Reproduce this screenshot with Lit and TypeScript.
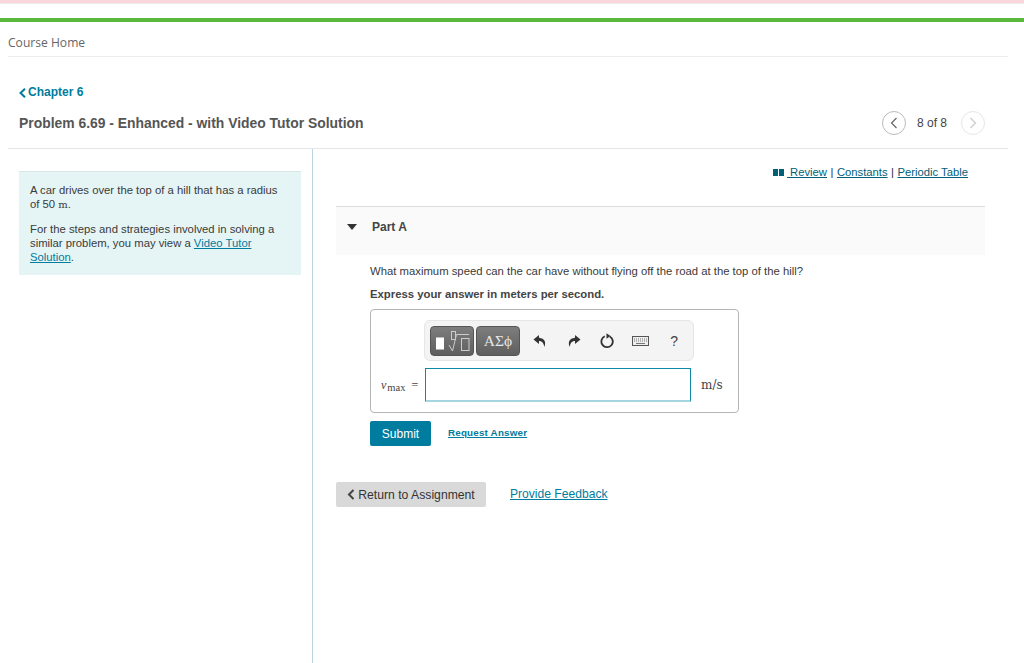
import { LitElement, html, css } from "lit";
import { customElement } from "lit/decorators.js";

@customElement("app-root")
export class AppRoot extends LitElement {
  static styles = css`
    :host { display: block; height: 663px; overflow: hidden; background: #fff; font-family: "Liberation Sans", Arial, sans-serif; color: #333; font-size: 11.3px; }
    a { color: #007c9e; text-decoration: underline; }
    .pink { height: 3px; background: #fbd6dc; border-bottom: 1px solid #ececec; }
    .green { height: 4px; margin-top: 14px; background: #5ab83c; }
    .home { margin: 0 16px 0 8px; height: 34px; border-bottom: 1px solid #ececec; font: 12.1px/41px "Open Sans", sans-serif; color: #666; }
    .head { margin: 0 16px 0 8px; height: 91px; border-bottom: 1px solid #e6e6e6; padding-left: 11px; }
    .chapter { display: flex; align-items: center; gap: 2px; padding-top: 29px; height: 13px; font-weight: 700; font-size: 12px; line-height: 13px; color: #007c9e; }
    .titlerow { display: flex; align-items: center; justify-content: space-between; margin-top: 14px; height: 20px; padding-right: 23px; }
    h1 { margin: 0; font-size: 13.9px; font-weight: 700; color: #555; line-height: 20px; }
    .pager { display: flex; align-items: center; font-size: 12px; color: #444; }
    .pager span.txt { margin: 0 14px 0 11px; }
    .circle { width: 24px; height: 24px; border: 1px solid #bbb; border-radius: 50%; box-sizing: border-box; display: flex; align-items: center; justify-content: center; }
    .circle.off { border-color: #e6e6e6; }
    .body { display: grid; grid-template-columns: 305px 1fr; margin-left: 8px; height: 514px; }
    .left { border-right: 1px solid #bcd3e3; padding: 22px 11px 0 11px; }
    .info { background: #e5f5f6; border-top: 1px solid #dbe6e8; padding: 11px 20px 0 11px; height: 92px; line-height: 14px; color: #3a3a3a; }
    .info p { margin: 0 0 11px; }
    .serif { font-family: "DejaVu Serif", "Liberation Serif", serif; font-size: 10px; line-height: 1; }
    .right { padding: 0 39px 0 23px; }
    .links { display: flex; justify-content: flex-end; align-items: center; height: 46px; padding-right: 17px; box-sizing: border-box; gap: 3.5px; margin-bottom: 11px; color: #333; font-size: 11.25px; }
    .links a { color: #00607a; }
    .links svg { margin-right: -1px; }
    .part { height: 49px; background: #fafafa; border-top: 1px solid #ddd; display: flex; align-items: center; padding: 0 0 8px 11px; gap: 15px; font-weight: 700; font-size: 12px; color: #444; box-sizing: border-box; }
    .content { padding-left: 34px; }
    .q { margin: 9px 0 0; line-height: 15px; font-size: 11.32px; color: #3a3a3a; }
    .ex { margin: 8px 0 0; line-height: 15px; font-weight: 700; font-size: 11.33px; color: #444; }
    .answer { margin-top: 7px; width: 369px; height: 104px; box-sizing: border-box; border: 1px solid #b5b5b5; border-radius: 4px; padding: 10px 0 0 53px; }
    .tools { width: 270px; height: 41px; box-sizing: border-box; background: #f4f4f4; border: 1px solid #e6e6e6; border-radius: 6px; display: flex; align-items: center; padding-left: 5px; }
    .tbtn { width: 44px; height: 30px; box-sizing: border-box; border-radius: 4px; border: 1px solid #555; background: linear-gradient(#7d7d7d, #5f5f5f); display: flex; align-items: center; justify-content: center; color: #e8e8e8; font: 15.5px "Liberation Serif", serif; margin-right: 2px; flex: none; }
    .ic { width: 33.5px; flex: none; display: flex; justify-content: center; align-items: center; color: #444; font-size: 14px; }
    .first { margin-left: 1.5px; }
    .inputrow { display: flex; align-items: center; margin-top: 7px; margin-left: -43px; height: 34px; }
    .var { width: 44px; font: 12px "Liberation Serif", serif; color: #444; white-space: nowrap; }
    .var sub { font-size: 10.5px; vertical-align: -2px; line-height: 0; margin: 0 6px 0 1px; }
    .box { width: 266px; height: 34px; box-sizing: border-box; border: 1px solid #0e8aa6; border-bottom: 2px solid #a5d6e0; background: #fff; flex: none; }
    .unit { margin-left: 10px; font: 12px "DejaVu Serif", serif; color: #444; }
    .actions { display: flex; align-items: center; margin-top: 8px; gap: 17px; }
    .submit { width: 61px; height: 25px; background: #007c9e; color: #fff; border-radius: 2px; display: flex; align-items: center; justify-content: center; font-size: 12px; }
    .req { font-weight: 700; font-size: 9.8px; letter-spacing: 0.2px; margin-top: -2px; }
    .footer { display: flex; align-items: center; margin-top: 36px; gap: 24px; font-size: 12.1px; }
    .footer a { margin-top: -2px; }
    .ret { width: 150px; height: 25px; background: #d9d9d9; border-radius: 2px; display: flex; align-items: center; justify-content: center; gap: 3px; color: #333; font-size: 12.2px; }
  `;

  render() {
    return html`
      <div class="pink"></div>
      <div class="green"></div>
      <div class="home">Course Home</div>
      <div class="head">
        <div class="chapter">
          <svg width="7" height="10" viewBox="0 0 7 10"><path d="M6 .7 1.500 5 6 9.300" fill="none" stroke="#007c9e" stroke-width="2"/></svg>
          <span>Chapter 6</span>
        </div>
        <div class="titlerow">
          <h1>Problem 6.69 - Enhanced - with Video Tutor Solution</h1>
          <div class="pager">
            <span class="circle"><svg width="8" height="12" viewBox="0 0 8 12"><path d="M6.500 1 1.500 6l5 5" fill="none" stroke="#666" stroke-width="1.200"/></svg></span>
            <span class="txt">8 of 8</span>
            <span class="circle off"><svg width="8" height="12" viewBox="0 0 8 12"><path d="M1.500 1l5 5-5 5" fill="none" stroke="#ccc" stroke-width="1.200"/></svg></span>
          </div>
        </div>
      </div>
      <div class="body">
        <div class="left">
          <div class="info">
            <p>A car drives over the top of a hill that has a radius of 50 <span class="serif">m</span>.</p>
            <p>For the steps and strategies involved in solving a similar problem, you may view a <a href="#">Video Tutor Solution</a>.</p>
          </div>
        </div>
        <div class="right">
          <div class="links">
            <svg width="11" height="7" viewBox="0 0 11 7"><path d="M0 0h5v7H0zM6 0h5v7H6z" fill="#00607a"/></svg>
            <a href="#">&nbsp;Review</a><span>|</span><a href="#">Constants</a><span>|</span><a href="#">Periodic Table</a>
          </div>
          <div class="part">
            <svg width="10" height="6" viewBox="0 0 10 6"><path d="M0 0h10L5 6z" fill="#333"/></svg>
            <span>Part A</span>
          </div>
          <div class="content">
            <p class="q">What maximum speed can the car have without flying off the road at the top of the hill?</p>
            <p class="ex">Express your answer in meters per second.</p>
            <div class="answer">
              <div class="tools">
                <div class="tbtn">
                  <svg width="38" height="26" viewBox="0 0 38 26">
                    <rect x="3" y="9.500" width="8" height="12" fill="#fff"/>
                    <rect x="18.500" y="3.500" width="4" height="8" fill="none" stroke="#ccc"/>
                    <path d="M16 17l3.500 6 4-16.500H36" fill="none" stroke="#ccc"/>
                    <rect x="28.500" y="10.500" width="7.500" height="12" fill="none" stroke="#ccc"/>
                  </svg>
                </div>
                <div class="tbtn">ΑΣϕ</div>
                <span class="ic first"><svg width="14" height="14" viewBox="0 0 14 14"><path d="M6 1 .5 5.500 6 10V7c2.500 0 4.500 1.500 5.500 6 1.500-5 .5-8.500-5.500-9.200z" fill="#333"/></svg></span>
                <span class="ic"><svg width="14" height="14" viewBox="0 0 14 14"><path d="M8 1l5.500 4.500L8 10V7c-2.500 0-4.500 1.500-5.500 6C1 8 2 4.500 8 3.800z" fill="#333"/></svg></span>
                <span class="ic"><svg width="15" height="16" viewBox="0 0 15 16"><path d="M9.800 3.500A5.700 5.700 0 1 1 4.800 3.300" fill="none" stroke="#333" stroke-width="1.800"/><path d="M6.500 .3v5.400l4-2.700z" fill="#333"/></svg></span>
                <span class="ic"><svg width="17" height="10" viewBox="0 0 17 10"><rect x=".5" y=".5" width="16" height="9" fill="#eee" stroke="#555"/><path d="M2 3h13M2 5h13" stroke="#777" stroke-dasharray="1 1"/><path d="M4 7.500h9" stroke="#777"/></svg></span>
                <span class="ic">?</span>
              </div>
              <div class="inputrow">
                <span class="var"><i>v</i><sub>max</sub>=</span>
                <div class="box"></div>
                <span class="unit">m/s</span>
              </div>
            </div>
            <div class="actions">
              <div class="submit">Submit</div>
              <a class="req" href="#">Request Answer</a>
            </div>
          </div>
          <div class="footer">
            <div class="ret">
              <svg width="8" height="11" viewBox="0 0 8 11"><path d="M6.500 1 2 5.500 6.500 10" fill="none" stroke="#444" stroke-width="2"/></svg>
              <span>Return to Assignment</span>
            </div>
            <a href="#">Provide Feedback</a>
          </div>
        </div>
      </div>
    `;
  }
}
